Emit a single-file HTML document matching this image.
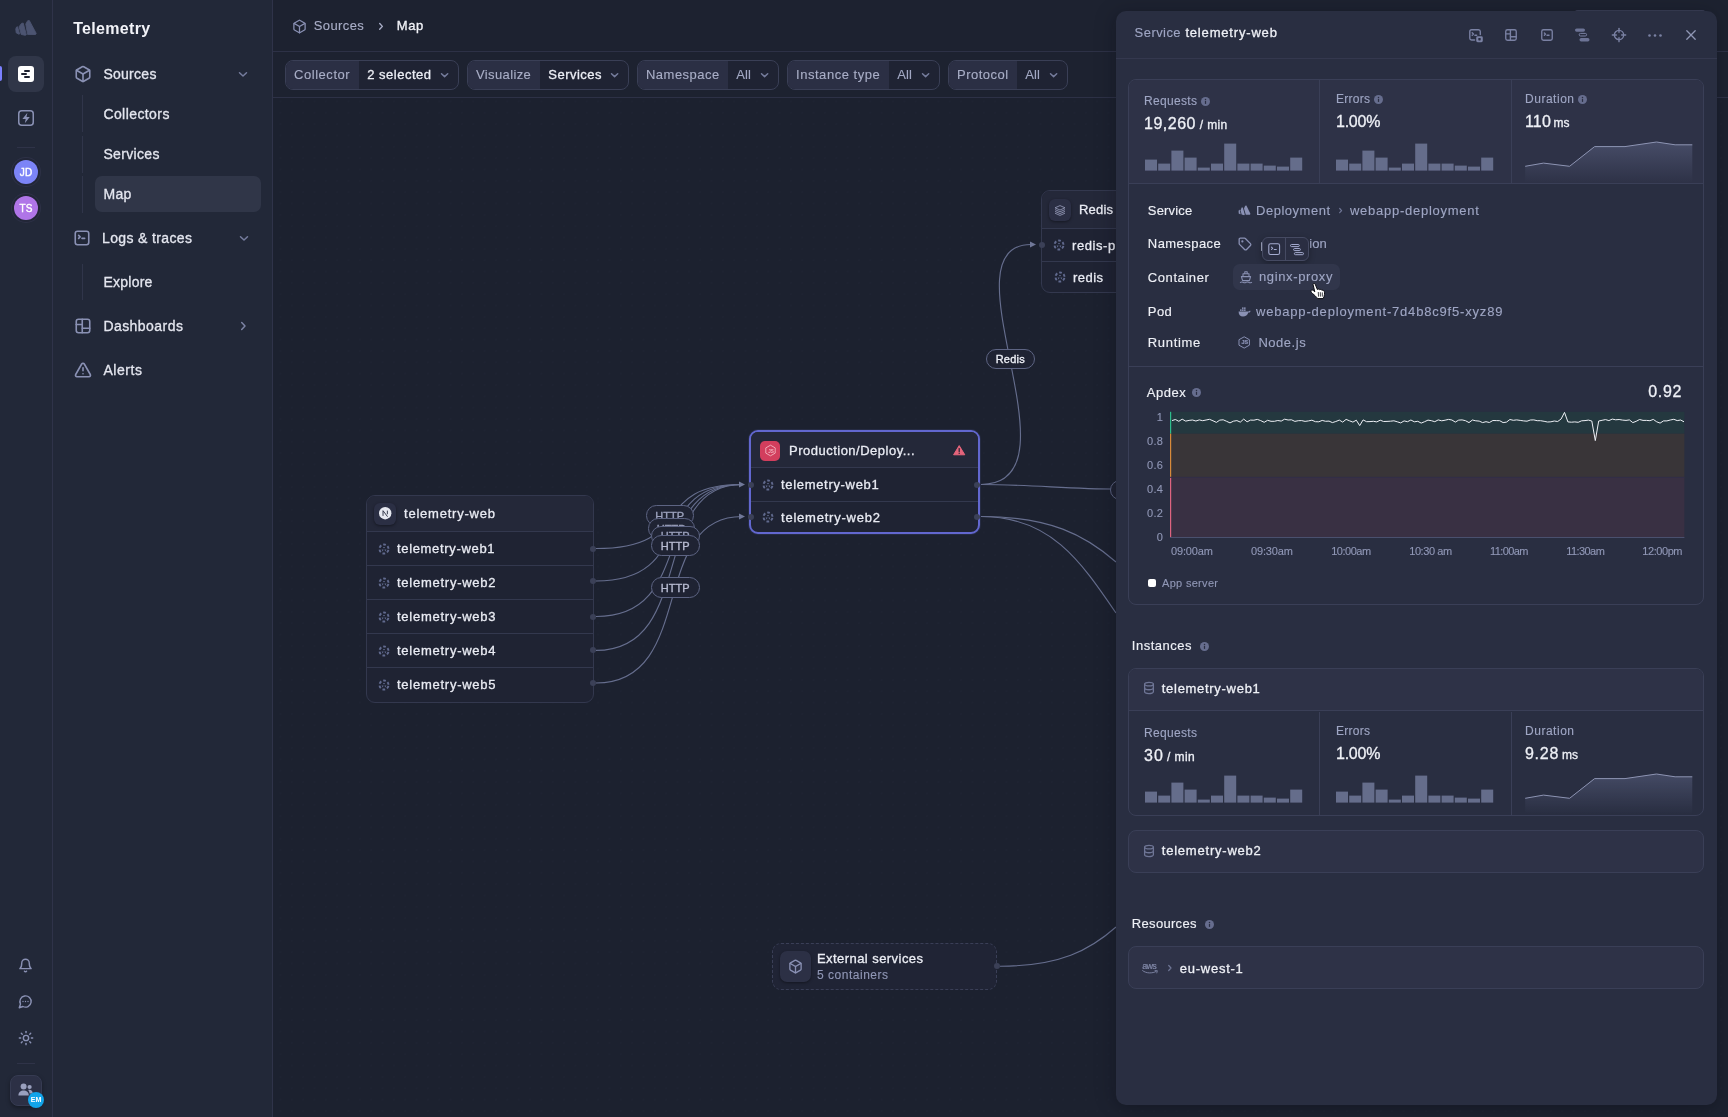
<!DOCTYPE html>
<html><head><meta charset="utf-8"><title>Telemetry - Map</title>
<style>
html,body{margin:0;padding:0;}
body{width:1728px;height:1117px;overflow:hidden;background:#1c212f;font-family:"Liberation Sans", sans-serif;position:relative;-webkit-font-smoothing:antialiased;}
#root{position:absolute;left:0;top:0;width:1728px;height:1117px;overflow:hidden;will-change:transform;}
</style></head><body><div id="root">
<div style="position:absolute;left:273px;top:98px;width:1455px;height:1019px;background-color:#1c212f;background-image:radial-gradient(circle,#363b54 0.3px,transparent 0.7px);background-size:11.345px 11.345px;background-position:1.8px -2.3px"></div>
<svg style="position:absolute;left:0;top:0" width="1728" height="1117" viewBox="0 0 1728 1117"><path d="M596 548.5 C697.4 548.5 648 484.5 742 484.5" stroke="#666e8e" stroke-width="1.15" fill="none"/><path d="M596 581 C697.4 581 648 484.5 742 484.5" stroke="#666e8e" stroke-width="1.15" fill="none"/><path d="M596 616.5 C697.4 616.5 648 484.5 742 484.5" stroke="#666e8e" stroke-width="1.15" fill="none"/><path d="M596 650.4 C697.4 650.4 648 484.5 742 484.5" stroke="#666e8e" stroke-width="1.15" fill="none"/><path d="M596 683 C697.4 683 648 516.5 742 516.5" stroke="#666e8e" stroke-width="1.15" fill="none"/><path d="M981 484.5 C1085 484.5 940 244.5 1031 244.5" stroke="#666e8e" stroke-width="1.15" fill="none"/><path d="M981 484.5 C1030 484.5 1070 489 1116 489" stroke="#666e8e" stroke-width="1.15" fill="none"/><path d="M981 516.5 C1050 516.5 1085 535 1116 562" stroke="#666e8e" stroke-width="1.15" fill="none"/><path d="M981 516.5 C1050 516.5 1080 560 1116 613" stroke="#666e8e" stroke-width="1.15" fill="none"/><path d="M1000 966.2 C1060 966.2 1090 950 1116 927" stroke="#666e8e" stroke-width="1.15" fill="none"/><path d="M745 484.5 L739 481.5 L739 487.5 Z" fill="#707898"/><path d="M745 516.5 L739 513.5 L739 519.5 Z" fill="#707898"/><path d="M1036 244.5 L1030 241.5 L1030 247.5 Z" fill="#707898"/></svg>
<div style="position:absolute;left:1110px;top:479.5px;width:40px;height:20px;box-sizing:border-box;border:1px solid #5d6483;border-radius:10px;background:#1f2333;"></div>
<div style="position:absolute;left:646.2px;top:505.4px;width:47.5px;height:20.6px;box-sizing:border-box;border:1px solid #5d6483;border-radius:10.3px;background:#1f2333"></div><span style="position:absolute;top:511px;font-size:11px;line-height:11px;letter-spacing:0.094px;color:#9ca2bd;white-space:nowrap;left:655.20px;-webkit-text-stroke:0.35px #9ca2bd;">HTTP</span>
<div style="position:absolute;left:647.8px;top:518.2px;width:47.5px;height:20.6px;box-sizing:border-box;border:1px solid #5d6483;border-radius:10.3px;background:#1f2333"></div><span style="position:absolute;top:524px;font-size:11px;line-height:11px;letter-spacing:0.094px;color:#9ca2bd;white-space:nowrap;left:656.70px;-webkit-text-stroke:0.35px #9ca2bd;">HTTP</span>
<div style="position:absolute;left:651.2px;top:525.7px;width:48.5px;height:20.6px;box-sizing:border-box;border:1px solid #5d6483;border-radius:10.3px;background:#1f2333"></div><span style="position:absolute;top:531px;font-size:11px;line-height:11px;letter-spacing:0.094px;color:#9ca2bd;white-space:nowrap;left:660.70px;-webkit-text-stroke:0.35px #9ca2bd;">HTTP</span>
<div style="position:absolute;left:651.2px;top:535.3px;width:48.5px;height:20.6px;box-sizing:border-box;border:1px solid #5d6483;border-radius:10.3px;background:#1f2333"></div><span style="position:absolute;top:541px;font-size:11px;line-height:11px;letter-spacing:0.094px;color:#b9bdd3;white-space:nowrap;left:660.70px;-webkit-text-stroke:0.35px #b9bdd3;">HTTP</span>
<div style="position:absolute;left:651.2px;top:577.3px;width:48.5px;height:20.8px;box-sizing:border-box;border:1px solid #5d6483;border-radius:10.4px;background:#1f2333"></div><span style="position:absolute;top:583px;font-size:11px;line-height:11px;letter-spacing:0.094px;color:#b9bdd3;white-space:nowrap;left:660.70px;-webkit-text-stroke:0.35px #b9bdd3;">HTTP</span>
<div style="position:absolute;left:986.2px;top:348.5px;width:48.5px;height:20px;box-sizing:border-box;border:1px solid #5d6483;border-radius:10.0px;background:#1f2333"></div><span style="position:absolute;top:354px;font-size:11px;line-height:11px;letter-spacing:0.220px;color:#eceef5;white-space:nowrap;left:995.70px;-webkit-text-stroke:0.35px #eceef5;">Redis</span>
<div style="position:absolute;left:366px;top:495px;width:228px;height:208px;box-sizing:border-box;border:1px solid #33384e;border-radius:9px;background:#1f2333;overflow:hidden"><div style="position:absolute;left:0;top:0;right:0;height:35px;background:#242839"></div><div style="position:absolute;left:0;right:0;top:35px;height:1px;background:#33384e"></div><div style="position:absolute;left:0;right:0;top:69px;height:1px;background:#33384e"></div><div style="position:absolute;left:0;right:0;top:103px;height:1px;background:#33384e"></div><div style="position:absolute;left:0;right:0;top:137px;height:1px;background:#33384e"></div><div style="position:absolute;left:0;right:0;top:171px;height:1px;background:#33384e"></div></div>
<div style="position:absolute;left:374px;top:502.5px;width:22px;height:22px;background:#2b2f44;border-radius:6px;box-shadow:0 1px 3px rgba(0,0,0,.4);"></div>
<svg style="position:absolute;left:378.8px;top:507.2px;overflow:visible;" width="12.4" height="12.4" viewBox="0 0 12 12" fill="none"><circle cx="6" cy="6" r="6" fill="#e6e8f0"/><path d="M3.9 8.6V3.6L8.3 9.4" stroke="#2a2e42" stroke-width="0.9" fill="none"/><path d="M8.1 3.5V7" stroke="#2a2e42" stroke-width="0.9"/></svg>
<span style="position:absolute;top:507px;font-size:13px;line-height:13px;letter-spacing:0.780px;color:#e9ebf3;white-space:nowrap;left:404.00px;-webkit-text-stroke:0.3px #e9ebf3;">telemetry-web</span>
<svg style="position:absolute;left:378.2px;top:542.5px;overflow:visible;" width="12" height="12" viewBox="0 0 12 12" fill="none"><circle cx="6" cy="6" r="4.5" stroke="#616a8e" stroke-width="1.9" stroke-dasharray="2.75 1.962" stroke-dashoffset="3.75"/><path d="M6 5.6 L4.9 3.9 H7.1Z M5.6 6.4 L3.6 6.6 L4.7 8.4Z M6.4 6.4 L8.4 6.6 L7.3 8.4Z" fill="#616a8e"/></svg>
<span style="position:absolute;top:542px;font-size:13px;line-height:13px;letter-spacing:0.664px;color:#e9ebf3;white-space:nowrap;left:397.00px;-webkit-text-stroke:0.3px #e9ebf3;">telemetry-web1</span>
<div style="position:absolute;left:590px;top:545.5px;width:6px;height:6px;background:#3b4057;border-radius:50%;"></div>
<svg style="position:absolute;left:378.2px;top:576.5px;overflow:visible;" width="12" height="12" viewBox="0 0 12 12" fill="none"><circle cx="6" cy="6" r="4.5" stroke="#616a8e" stroke-width="1.9" stroke-dasharray="2.75 1.962" stroke-dashoffset="3.75"/><path d="M6 5.6 L4.9 3.9 H7.1Z M5.6 6.4 L3.6 6.6 L4.7 8.4Z M6.4 6.4 L8.4 6.6 L7.3 8.4Z" fill="#616a8e"/></svg>
<span style="position:absolute;top:576px;font-size:13px;line-height:13px;letter-spacing:0.741px;color:#e9ebf3;white-space:nowrap;left:397.00px;-webkit-text-stroke:0.3px #e9ebf3;">telemetry-web2</span>
<div style="position:absolute;left:590px;top:578px;width:6px;height:6px;background:#3b4057;border-radius:50%;"></div>
<svg style="position:absolute;left:378.2px;top:610.5px;overflow:visible;" width="12" height="12" viewBox="0 0 12 12" fill="none"><circle cx="6" cy="6" r="4.5" stroke="#616a8e" stroke-width="1.9" stroke-dasharray="2.75 1.962" stroke-dashoffset="3.75"/><path d="M6 5.6 L4.9 3.9 H7.1Z M5.6 6.4 L3.6 6.6 L4.7 8.4Z M6.4 6.4 L8.4 6.6 L7.3 8.4Z" fill="#616a8e"/></svg>
<span style="position:absolute;top:610px;font-size:13px;line-height:13px;letter-spacing:0.741px;color:#e9ebf3;white-space:nowrap;left:397.00px;-webkit-text-stroke:0.3px #e9ebf3;">telemetry-web3</span>
<div style="position:absolute;left:590px;top:613.5px;width:6px;height:6px;background:#3b4057;border-radius:50%;"></div>
<svg style="position:absolute;left:378.2px;top:644.5px;overflow:visible;" width="12" height="12" viewBox="0 0 12 12" fill="none"><circle cx="6" cy="6" r="4.5" stroke="#616a8e" stroke-width="1.9" stroke-dasharray="2.75 1.962" stroke-dashoffset="3.75"/><path d="M6 5.6 L4.9 3.9 H7.1Z M5.6 6.4 L3.6 6.6 L4.7 8.4Z M6.4 6.4 L8.4 6.6 L7.3 8.4Z" fill="#616a8e"/></svg>
<span style="position:absolute;top:644px;font-size:13px;line-height:13px;letter-spacing:0.741px;color:#e9ebf3;white-space:nowrap;left:397.00px;-webkit-text-stroke:0.3px #e9ebf3;">telemetry-web4</span>
<div style="position:absolute;left:590px;top:647.4px;width:6px;height:6px;background:#3b4057;border-radius:50%;"></div>
<svg style="position:absolute;left:378.2px;top:678.5px;overflow:visible;" width="12" height="12" viewBox="0 0 12 12" fill="none"><circle cx="6" cy="6" r="4.5" stroke="#616a8e" stroke-width="1.9" stroke-dasharray="2.75 1.962" stroke-dashoffset="3.75"/><path d="M6 5.6 L4.9 3.9 H7.1Z M5.6 6.4 L3.6 6.6 L4.7 8.4Z M6.4 6.4 L8.4 6.6 L7.3 8.4Z" fill="#616a8e"/></svg>
<span style="position:absolute;top:678px;font-size:13px;line-height:13px;letter-spacing:0.741px;color:#e9ebf3;white-space:nowrap;left:397.00px;-webkit-text-stroke:0.3px #e9ebf3;">telemetry-web5</span>
<div style="position:absolute;left:590px;top:680px;width:6px;height:6px;background:#3b4057;border-radius:50%;"></div>
<div style="position:absolute;left:749px;top:430px;width:231px;height:104px;box-sizing:border-box;border:2px solid #6267cf;border-radius:9px;background:#1f2333;box-shadow:0 0 0 1px rgba(107,112,217,.12);overflow:hidden"><div style="position:absolute;left:0;top:0;right:0;height:35px;background:#242839"></div><div style="position:absolute;left:0;right:0;top:35px;height:1px;background:#33384e"></div><div style="position:absolute;left:0;right:0;top:69px;height:1px;background:#33384e"></div></div>
<div style="position:absolute;left:760px;top:440.5px;width:20px;height:20px;background:#d23e5d;border-radius:5px;"></div>
<svg style="position:absolute;left:763.5px;top:444px;overflow:visible;" width="13" height="13" viewBox="0 0 13 13" fill="none"><path d="M6.5 1.2 L11.2 3.9 V9.1 L6.5 11.8 L1.8 9.1 V3.9 Z" stroke="#f3b3c0" stroke-width="0.9" fill="none"/><text x="4.2" y="8.6" font-family="Liberation Sans" font-size="4.6" font-weight="bold" fill="#f3b3c0">JS</text></svg>
<span style="position:absolute;top:444px;font-size:13px;line-height:13px;letter-spacing:0.495px;color:#e9ebf3;white-space:nowrap;left:789.00px;-webkit-text-stroke:0.3px #e9ebf3;">Production/Deploy...</span>
<svg style="position:absolute;left:952.8px;top:444.8px;overflow:visible;" width="12.4" height="10.4" viewBox="0 0 12.4 10.4" fill="none"><path d="M6.2 0.6 L11.8 9.8 H0.6 Z" fill="#e5647b" stroke="#e5647b" stroke-width="1" stroke-linejoin="round"/><path d="M6.2 3.6V6.4" stroke="#1f2333" stroke-width="1.2" stroke-linecap="round"/><circle cx="6.2" cy="8.2" r="0.7" fill="#1f2333"/></svg>
<svg style="position:absolute;left:762.2px;top:478.6px;overflow:visible;" width="12" height="12" viewBox="0 0 12 12" fill="none"><circle cx="6" cy="6" r="4.5" stroke="#616a8e" stroke-width="1.9" stroke-dasharray="2.75 1.962" stroke-dashoffset="3.75"/><path d="M6 5.6 L4.9 3.9 H7.1Z M5.6 6.4 L3.6 6.6 L4.7 8.4Z M6.4 6.4 L8.4 6.6 L7.3 8.4Z" fill="#616a8e"/></svg>
<span style="position:absolute;top:478px;font-size:13px;line-height:13px;letter-spacing:0.679px;color:#e9ebf3;white-space:nowrap;left:781.00px;-webkit-text-stroke:0.3px #e9ebf3;">telemetry-web1</span>
<div style="position:absolute;left:747.8px;top:481.6px;width:6px;height:6px;background:#3b4057;border-radius:50%;"></div>
<div style="position:absolute;left:974px;top:481.6px;width:6px;height:6px;background:#3b4057;border-radius:50%;"></div>
<svg style="position:absolute;left:762.2px;top:510.79999999999995px;overflow:visible;" width="12" height="12" viewBox="0 0 12 12" fill="none"><circle cx="6" cy="6" r="4.5" stroke="#616a8e" stroke-width="1.9" stroke-dasharray="2.75 1.962" stroke-dashoffset="3.75"/><path d="M6 5.6 L4.9 3.9 H7.1Z M5.6 6.4 L3.6 6.6 L4.7 8.4Z M6.4 6.4 L8.4 6.6 L7.3 8.4Z" fill="#616a8e"/></svg>
<span style="position:absolute;top:511px;font-size:13px;line-height:13px;letter-spacing:0.779px;color:#e9ebf3;white-space:nowrap;left:781.00px;-webkit-text-stroke:0.3px #e9ebf3;">telemetry-web2</span>
<div style="position:absolute;left:747.8px;top:513.8px;width:6px;height:6px;background:#3b4057;border-radius:50%;"></div>
<div style="position:absolute;left:974px;top:513.8px;width:6px;height:6px;background:#3b4057;border-radius:50%;"></div>
<div style="position:absolute;left:1041px;top:190px;width:120px;height:103px;box-sizing:border-box;border:1px solid #33384e;border-radius:9px;background:#1f2333;overflow:hidden"><div style="position:absolute;left:0;top:0;right:0;height:37px;background:#242839"></div><div style="position:absolute;left:0;right:0;top:37px;height:1px;background:#33384e"></div><div style="position:absolute;left:0;right:0;top:70px;height:1px;background:#33384e"></div></div>
<div style="position:absolute;left:1049px;top:199px;width:22px;height:22px;background:#2b2f44;border-radius:6px;box-shadow:0 1px 3px rgba(0,0,0,.4);"></div>
<svg style="position:absolute;left:1054px;top:204px;overflow:visible;" width="12" height="12" viewBox="0 0 12 12" fill="none"><g stroke="#9aa0be" stroke-width="0.8" fill="none"><path d="M6 1.6 L11 3.8 L6 6 L1 3.8Z"/><path d="M1 5.6 L6 7.8 L11 5.6"/><path d="M1 7.4 L6 9.6 L11 7.4"/><path d="M1 9.2 L6 11.4 L11 9.2"/></g></svg>
<span style="position:absolute;top:203px;font-size:13px;line-height:13px;letter-spacing:0.190px;color:#e9ebf3;white-space:nowrap;left:1079.00px;-webkit-text-stroke:0.3px #e9ebf3;">Redis</span>
<svg style="position:absolute;left:1052.8px;top:238.7px;overflow:visible;" width="12" height="12" viewBox="0 0 12 12" fill="none"><circle cx="6" cy="6" r="4.5" stroke="#616a8e" stroke-width="1.9" stroke-dasharray="2.75 1.962" stroke-dashoffset="3.75"/><path d="M6 5.6 L4.9 3.9 H7.1Z M5.6 6.4 L3.6 6.6 L4.7 8.4Z M6.4 6.4 L8.4 6.6 L7.3 8.4Z" fill="#616a8e"/></svg>
<span style="position:absolute;top:239px;font-size:13px;line-height:13px;letter-spacing:0.570px;color:#e9ebf3;white-space:nowrap;left:1072.00px;-webkit-text-stroke:0.3px #e9ebf3;">redis-proxy</span>
<svg style="position:absolute;left:1053.8px;top:270.7px;overflow:visible;" width="12" height="12" viewBox="0 0 12 12" fill="none"><circle cx="6" cy="6" r="4.5" stroke="#616a8e" stroke-width="1.9" stroke-dasharray="2.75 1.962" stroke-dashoffset="3.75"/><path d="M6 5.6 L4.9 3.9 H7.1Z M5.6 6.4 L3.6 6.6 L4.7 8.4Z M6.4 6.4 L8.4 6.6 L7.3 8.4Z" fill="#616a8e"/></svg>
<span style="position:absolute;top:271px;font-size:13px;line-height:13px;letter-spacing:0.455px;color:#e9ebf3;white-space:nowrap;left:1073.00px;-webkit-text-stroke:0.3px #e9ebf3;">redis</span>
<div style="position:absolute;left:1039px;top:241.6px;width:6px;height:6px;background:#3b4057;border-radius:50%;"></div>
<div style="position:absolute;left:771.5px;top:943px;width:225.5px;height:47px;box-sizing:border-box;border:1px dashed #3a3f57;border-radius:9px;background:#202435;"></div>
<div style="position:absolute;left:779.5px;top:950.5px;width:31px;height:31px;background:#2c3045;border-radius:7px;box-shadow:0 1px 3px rgba(0,0,0,.4);"></div>
<svg style="position:absolute;left:787.5px;top:958.5px;overflow:visible;" width="15" height="15" viewBox="0 0 24 24" fill="none"><g stroke="#8a91b4" stroke-width="2.08" stroke-linecap="round" stroke-linejoin="round" fill="none"><path d="M21 8a2 2 0 0 0-1-1.73l-7-4a2 2 0 0 0-2 0l-7 4A2 2 0 0 0 3 8v8a2 2 0 0 0 1 1.73l7 4a2 2 0 0 0 2 0l7-4A2 2 0 0 0 21 16Z"/><path d="m3.3 7 8.7 5 8.7-5"/><path d="M12 22V12"/></g></svg>
<span style="position:absolute;top:952px;font-size:13px;line-height:13px;letter-spacing:0.438px;color:#eceef5;white-space:nowrap;left:817.00px;-webkit-text-stroke:0.3px #eceef5;">External services</span>
<span style="position:absolute;top:969px;font-size:12px;line-height:12px;letter-spacing:0.512px;color:#9097b6;white-space:nowrap;left:817.00px;-webkit-text-stroke:0.12px #9097b6;">5 containers</span>
<div style="position:absolute;left:993.8px;top:963.2px;width:6px;height:6px;background:#3b4057;border-radius:50%;"></div>
<div style="position:absolute;left:273px;top:0px;width:1455px;height:97px;background:#1d2230;"></div>
<div style="position:absolute;left:273px;top:51px;width:1455px;height:1px;background:#2d3146;"></div>
<div style="position:absolute;left:273px;top:97px;width:1455px;height:1px;background:#2d3146;"></div>
<svg style="position:absolute;left:291.5px;top:18.5px;overflow:visible;" width="15" height="15" viewBox="0 0 24 24" fill="none"><g stroke="#8a91b4" stroke-width="2.00" stroke-linecap="round" stroke-linejoin="round" fill="none"><path d="M21 8a2 2 0 0 0-1-1.73l-7-4a2 2 0 0 0-2 0l-7 4A2 2 0 0 0 3 8v8a2 2 0 0 0 1 1.73l7 4a2 2 0 0 0 2 0l7-4A2 2 0 0 0 21 16Z"/><path d="m3.3 7 8.7 5 8.7-5"/><path d="M12 22V12"/></g></svg>
<span style="position:absolute;top:19px;font-size:13px;line-height:13px;letter-spacing:0.384px;color:#a9aec7;white-space:nowrap;left:313.80px;-webkit-text-stroke:0.12px #a9aec7;">Sources</span>
<svg style="position:absolute;left:378.6px;top:22.6px;overflow:visible;" width="4.4" height="6.8" viewBox="0 0 4.4 6.8" fill="none"><path d="M0.7 0.5 L3.4 3.4 L0.7 6.3" stroke="#a9aec7" stroke-width="1.4" stroke-linecap="round" stroke-linejoin="round"/></svg>
<span style="position:absolute;top:19px;font-size:13px;line-height:13px;letter-spacing:0.554px;color:#f2f3f8;white-space:nowrap;left:396.80px;-webkit-text-stroke:0.3px #f2f3f8;">Map</span>
<div style="position:absolute;left:285px;top:60px;width:174px;height:30px;box-sizing:border-box;border:1px solid #3a3f56;border-radius:8px;background:#1f2333;overflow:hidden"><div style="position:absolute;left:0;top:0;bottom:0;width:73px;background:#2b2f44"></div></div><span style="position:absolute;top:68px;font-size:13px;line-height:13px;letter-spacing:0.550px;color:#a9aec7;white-space:nowrap;left:294.00px;-webkit-text-stroke:0.12px #a9aec7;">Collector</span><span style="position:absolute;top:68px;font-size:13px;line-height:13px;letter-spacing:0.493px;color:#eceef5;white-space:nowrap;left:367.30px;-webkit-text-stroke:0.3px #eceef5;">2 selected</span><svg style="position:absolute;left:441.4px;top:72.9px;overflow:visible;" width="7.2" height="4.6" viewBox="0 0 7.2 4.6" fill="none"><path d="M0.5 0.7 L3.6 3.6 L6.7 0.7" stroke="#757c9c" stroke-width="1.5" stroke-linecap="round" stroke-linejoin="round"/></svg>
<div style="position:absolute;left:467px;top:60px;width:162px;height:30px;box-sizing:border-box;border:1px solid #3a3f56;border-radius:8px;background:#1f2333;overflow:hidden"><div style="position:absolute;left:0;top:0;bottom:0;width:72px;background:#2b2f44"></div></div><span style="position:absolute;top:68px;font-size:13px;line-height:13px;letter-spacing:0.376px;color:#a9aec7;white-space:nowrap;left:476.00px;-webkit-text-stroke:0.12px #a9aec7;">Visualize</span><span style="position:absolute;top:68px;font-size:13px;line-height:13px;letter-spacing:0.478px;color:#eceef5;white-space:nowrap;left:548.30px;-webkit-text-stroke:0.3px #eceef5;">Services</span><svg style="position:absolute;left:611.4px;top:72.9px;overflow:visible;" width="7.2" height="4.6" viewBox="0 0 7.2 4.6" fill="none"><path d="M0.5 0.7 L3.6 3.6 L6.7 0.7" stroke="#757c9c" stroke-width="1.5" stroke-linecap="round" stroke-linejoin="round"/></svg>
<div style="position:absolute;left:637px;top:60px;width:142px;height:30px;box-sizing:border-box;border:1px solid #3a3f56;border-radius:8px;background:#1f2333;overflow:hidden"><div style="position:absolute;left:0;top:0;bottom:0;width:90px;background:#2b2f44"></div></div><span style="position:absolute;top:68px;font-size:13px;line-height:13px;letter-spacing:0.479px;color:#a9aec7;white-space:nowrap;left:646.00px;-webkit-text-stroke:0.12px #a9aec7;">Namespace</span><span style="position:absolute;top:68px;font-size:13px;line-height:13px;letter-spacing:0.025px;color:#a2a8c3;white-space:nowrap;left:736.30px;-webkit-text-stroke:0.12px #a2a8c3;">All</span><svg style="position:absolute;left:761.4px;top:72.9px;overflow:visible;" width="7.2" height="4.6" viewBox="0 0 7.2 4.6" fill="none"><path d="M0.5 0.7 L3.6 3.6 L6.7 0.7" stroke="#757c9c" stroke-width="1.5" stroke-linecap="round" stroke-linejoin="round"/></svg>
<div style="position:absolute;left:787px;top:60px;width:153px;height:30px;box-sizing:border-box;border:1px solid #3a3f56;border-radius:8px;background:#1f2333;overflow:hidden"><div style="position:absolute;left:0;top:0;bottom:0;width:101px;background:#2b2f44"></div></div><span style="position:absolute;top:68px;font-size:13px;line-height:13px;letter-spacing:0.539px;color:#a9aec7;white-space:nowrap;left:796.00px;-webkit-text-stroke:0.12px #a9aec7;">Instance type</span><span style="position:absolute;top:68px;font-size:13px;line-height:13px;letter-spacing:0.025px;color:#a2a8c3;white-space:nowrap;left:897.30px;-webkit-text-stroke:0.12px #a2a8c3;">All</span><svg style="position:absolute;left:922.4px;top:72.9px;overflow:visible;" width="7.2" height="4.6" viewBox="0 0 7.2 4.6" fill="none"><path d="M0.5 0.7 L3.6 3.6 L6.7 0.7" stroke="#757c9c" stroke-width="1.5" stroke-linecap="round" stroke-linejoin="round"/></svg>
<div style="position:absolute;left:948px;top:60px;width:120px;height:30px;box-sizing:border-box;border:1px solid #3a3f56;border-radius:8px;background:#1f2333;overflow:hidden"><div style="position:absolute;left:0;top:0;bottom:0;width:68px;background:#2b2f44"></div></div><span style="position:absolute;top:68px;font-size:13px;line-height:13px;letter-spacing:0.501px;color:#a9aec7;white-space:nowrap;left:957.00px;-webkit-text-stroke:0.12px #a9aec7;">Protocol</span><span style="position:absolute;top:68px;font-size:13px;line-height:13px;letter-spacing:0.025px;color:#a2a8c3;white-space:nowrap;left:1025.30px;-webkit-text-stroke:0.12px #a2a8c3;">All</span><svg style="position:absolute;left:1050.4px;top:72.9px;overflow:visible;" width="7.2" height="4.6" viewBox="0 0 7.2 4.6" fill="none"><path d="M0.5 0.7 L3.6 3.6 L6.7 0.7" stroke="#757c9c" stroke-width="1.5" stroke-linecap="round" stroke-linejoin="round"/></svg>
<div style="position:absolute;left:0px;top:0px;width:272px;height:1117px;background:#222838;"></div>
<div style="position:absolute;left:52px;top:0px;width:1px;height:1117px;background:#2f3349;"></div>
<div style="position:absolute;left:272px;top:0px;width:1px;height:1117px;background:#2f3349;"></div>
<svg style="position:absolute;left:14px;top:19px;overflow:visible;" width="24" height="18" viewBox="0 0 24 18" fill="none"><g fill="#4c5471" stroke="#4c5471" stroke-width="0.9" stroke-linejoin="round"><path d="M13.7 1.700L15.300 1.500L22.200 14.400L21.500 15.500L13.600 15.400L11.800 5Z"/><path d="M7.500 4.400L9.200 4.100L12.300 15.700L11.200 16.300L7.200 15.400L5.100 7.800Z"/><path d="M2.600 8L3.600 7.800L5.600 14.900L5 15.300L2.200 13.800L1.800 10Z"/></g></svg>
<div style="position:absolute;left:0px;top:66px;width:2px;height:15px;background:#7b80ff;border-radius:0 2px 2px 0;"></div>
<div style="position:absolute;left:8px;top:56px;width:36px;height:36px;background:#303648;border-radius:8px;"></div>
<div style="position:absolute;left:18px;top:66px;width:16px;height:16px;background:#ffffff;border-radius:3px;"></div>
<div style="position:absolute;left:23.5px;top:70.2px;width:6.5px;height:1.9px;background:#1d2130;border-radius:1px;"></div>
<div style="position:absolute;left:21px;top:73.1px;width:6px;height:1.9px;background:#1d2130;border-radius:1px;"></div>
<div style="position:absolute;left:24px;top:76px;width:6px;height:1.9px;background:#1d2130;border-radius:1px;"></div>
<svg style="position:absolute;left:17px;top:109.1px;overflow:visible;" width="18" height="18" viewBox="0 0 18 18" fill="none"><rect x="1.750" y="1.750" width="14.500" height="14.500" rx="3" stroke="#8a91b4" stroke-width="1.500"/><path d="M10.400 3.700L5.400 9.900H8.700L7.800 14.300L12.800 8H9.500Z" fill="#8a91b4"/></svg>
<div style="position:absolute;left:17px;top:147px;width:18px;height:1px;background:#2f3348;"></div>
<div style="position:absolute;left:14px;top:160px;width:24px;height:24px;border-radius:50%;background:#7c84f7;box-shadow:0 0 0 2px #222637,0 0 0 3px #2d3146;color:#fff;font-size:10px;line-height:25.6px;text-align:center;letter-spacing:0.2px;-webkit-text-stroke:0.4px #fff">JD</div>
<div style="position:absolute;left:14px;top:196px;width:24px;height:24px;border-radius:50%;background:#b075e8;box-shadow:0 0 0 2px #222637,0 0 0 3px #2d3146;color:#fff;font-size:10px;line-height:25.6px;text-align:center;letter-spacing:0.2px;-webkit-text-stroke:0.4px #fff">TS</div>
<svg style="position:absolute;left:18.2px;top:958.2px;overflow:visible;" width="15" height="15" viewBox="0 0 24 24" fill="none"><g stroke="#8a91b4" stroke-width="2.24" stroke-linecap="round" stroke-linejoin="round" fill="none"><path d="M6 8a6 6 0 0 1 12 0c0 7 3 9 3 9H3s3-2 3-9"/><path d="M10.3 21a1.94 1.94 0 0 0 3.4 0"/></g></svg>
<svg style="position:absolute;left:18.2px;top:994.1px;overflow:visible;" width="15" height="15" viewBox="0 0 24 24" fill="none"><g stroke="#8a91b4" stroke-width="2.24" stroke-linecap="round" stroke-linejoin="round" fill="none"><path d="M7.9 20A9 9 0 1 0 4 16.1L2 22Z"/><path d="M8 12h.01"/><path d="M12 12h.01"/><path d="M16 12h.01"/></g></svg>
<svg style="position:absolute;left:18.0px;top:1030.0px;overflow:visible;" width="16" height="16" viewBox="0 0 24 24" fill="none"><g stroke="#8a91b4" stroke-width="2.10" stroke-linecap="round" stroke-linejoin="round" fill="none"><circle cx="12" cy="12" r="4"/><path d="M12 2v2"/><path d="M12 20v2"/><path d="m4.93 4.93 1.41 1.41"/><path d="m17.66 17.66 1.41 1.41"/><path d="M2 12h2"/><path d="M20 12h2"/><path d="m6.34 17.66-1.41 1.41"/><path d="m19.07 4.93-1.41 1.41"/></g></svg>
<div style="position:absolute;left:17px;top:1063px;width:18px;height:1px;background:#2f3348;"></div>
<div style="position:absolute;left:10px;top:1075px;width:32px;height:31px;box-sizing:border-box;border:1px solid #363b52;background:#2c3045;border-radius:8px;box-shadow:0 2px 4px rgba(0,0,0,.35);"></div>
<svg style="position:absolute;left:18px;top:1083px;overflow:visible;" width="15" height="13" viewBox="0 0 15 13" fill="none"><g fill="#9aa0be"><circle cx="5.6" cy="3.4" r="3"/><path d="M0.4 12.4c0-3.2 2.3-5 5.2-5s5.2 1.8 5.2 5z"/><circle cx="11.6" cy="4" r="2.1"/><path d="M10.2 7c2.6-.6 4.6.8 4.6 3.6h-3.2c-.1-1.5-.6-2.7-1.4-3.6z"/></g></svg>
<div style="position:absolute;left:28px;top:1092px;width:16px;height:16px;border-radius:50%;background:#12a4e9;color:#fff;font-size:7px;font-weight:bold;line-height:16px;text-align:center">EM</div>
<span style="position:absolute;top:21px;font-size:16px;line-height:16px;letter-spacing:0.324px;color:#f2f3f8;white-space:nowrap;left:73.20px;font-weight:bold;">Telemetry</span>
<svg style="position:absolute;left:74.0px;top:65.2px;overflow:visible;" width="18" height="18" viewBox="0 0 24 24" fill="none"><g stroke="#8a91b4" stroke-width="2.13" stroke-linecap="round" stroke-linejoin="round" fill="none"><path d="M21 8a2 2 0 0 0-1-1.73l-7-4a2 2 0 0 0-2 0l-7 4A2 2 0 0 0 3 8v8a2 2 0 0 0 1 1.73l7 4a2 2 0 0 0 2 0l7-4A2 2 0 0 0 21 16Z"/><path d="m3.3 7 8.7 5 8.7-5"/><path d="M12 22V12"/></g></svg>
<span style="position:absolute;top:67px;font-size:14px;line-height:14px;letter-spacing:0.273px;color:#e4e6ef;white-space:nowrap;left:103.40px;-webkit-text-stroke:0.3px #e4e6ef;">Sources</span>
<svg style="position:absolute;left:239px;top:71.7px;overflow:visible;" width="8" height="5" viewBox="0 0 8 5" fill="none"><path d="M0.5 0.7 L4 4 L7.5 0.7" stroke="#767d9e" stroke-width="1.5" stroke-linecap="round" stroke-linejoin="round"/></svg>
<div style="position:absolute;left:95px;top:176px;width:166px;height:36px;background:#303648;border-radius:7px;"></div>
<div style="position:absolute;left:82px;top:95px;width:1px;height:37px;background:#30354a;"></div>
<div style="position:absolute;left:82px;top:135.5px;width:1px;height:37px;background:#30354a;"></div>
<div style="position:absolute;left:82px;top:175.5px;width:1px;height:37px;background:#30354a;"></div>
<div style="position:absolute;left:82px;top:264px;width:1px;height:36px;background:#30354a;"></div>
<span style="position:absolute;top:107px;font-size:14px;line-height:14px;letter-spacing:0.417px;color:#e4e6ef;white-space:nowrap;left:103.40px;-webkit-text-stroke:0.3px #e4e6ef;">Collectors</span>
<span style="position:absolute;top:147px;font-size:14px;line-height:14px;letter-spacing:0.331px;color:#e4e6ef;white-space:nowrap;left:103.40px;-webkit-text-stroke:0.3px #e4e6ef;">Services</span>
<span style="position:absolute;top:187px;font-size:14px;line-height:14px;letter-spacing:0.382px;color:#e4e6ef;white-space:nowrap;left:103.40px;-webkit-text-stroke:0.3px #e4e6ef;">Map</span>
<svg style="position:absolute;left:73.0px;top:229.0px;overflow:visible;" width="18" height="18" viewBox="0 0 24 24" fill="none"><g stroke="#8a91b4" stroke-width="2.13" stroke-linecap="round" stroke-linejoin="round" fill="none"><rect x="3" y="3" width="18" height="18" rx="3"/><path d="m7.5 8.5 2 2-2 2"/><path d="M12 12.5h3.5"/></g></svg>
<span style="position:absolute;top:231px;font-size:14px;line-height:14px;letter-spacing:0.360px;color:#e4e6ef;white-space:nowrap;left:102.00px;-webkit-text-stroke:0.3px #e4e6ef;">Logs &amp; traces</span>
<svg style="position:absolute;left:240px;top:235.7px;overflow:visible;" width="8" height="5" viewBox="0 0 8 5" fill="none"><path d="M0.5 0.7 L4 4 L7.5 0.7" stroke="#767d9e" stroke-width="1.5" stroke-linecap="round" stroke-linejoin="round"/></svg>
<span style="position:absolute;top:275px;font-size:14px;line-height:14px;letter-spacing:0.255px;color:#e4e6ef;white-space:nowrap;left:103.40px;-webkit-text-stroke:0.3px #e4e6ef;">Explore</span>
<svg style="position:absolute;left:74.0px;top:317.0px;overflow:visible;" width="18" height="18" viewBox="0 0 24 24" fill="none"><g stroke="#8a91b4" stroke-width="2.13" stroke-linecap="round" stroke-linejoin="round" fill="none"><rect x="3" y="3" width="18" height="18" rx="3"/><path d="M11 3v18"/><path d="M11 15h10"/><path d="M3 10h8"/></g></svg>
<span style="position:absolute;top:319px;font-size:14px;line-height:14px;letter-spacing:0.445px;color:#e4e6ef;white-space:nowrap;left:103.40px;-webkit-text-stroke:0.3px #e4e6ef;">Dashboards</span>
<svg style="position:absolute;left:241.0px;top:322px;overflow:visible;" width="5" height="8" viewBox="0 0 5 8" fill="none"><path d="M0.7 0.5 L4 4 L0.7 7.5" stroke="#7c83a4" stroke-width="1.5" stroke-linecap="round" stroke-linejoin="round"/></svg>
<svg style="position:absolute;left:74.0px;top:360.6px;overflow:visible;" width="18" height="18" viewBox="0 0 24 24" fill="none"><g stroke="#8a91b4" stroke-width="2.13" stroke-linecap="round" stroke-linejoin="round" fill="none"><path d="m21.73 18-8-14a2 2 0 0 0-3.48 0l-8 14A2 2 0 0 0 4 21h16a2 2 0 0 0 1.73-3Z"/><path d="M12 9v4"/><path d="M12 17h.01"/></g></svg>
<span style="position:absolute;top:363px;font-size:14px;line-height:14px;letter-spacing:0.542px;color:#e4e6ef;white-space:nowrap;left:103.40px;-webkit-text-stroke:0.3px #e4e6ef;">Alerts</span>
<div style="position:absolute;left:1573px;top:10px;width:134px;height:6px;background:#272b3d;border-top:1px solid #3a3f56;border-radius:5px 5px 0 0;"></div>
<div style="position:absolute;left:1116px;top:11px;width:601px;height:1094px;background:#292e41;border-radius:10px;box-shadow:-4px 0 20px rgba(12,14,24,.16),0 4px 14px rgba(12,14,24,.14);"></div>
<span style="position:absolute;top:26px;font-size:13px;line-height:13px;letter-spacing:0.441px;color:#9fa6c4;white-space:nowrap;left:1134.60px;-webkit-text-stroke:0.12px #9fa6c4;">Service</span>
<span style="position:absolute;top:26px;font-size:13px;line-height:13px;letter-spacing:0.821px;color:#eef0f6;white-space:nowrap;left:1185.40px;-webkit-text-stroke:0.3px #eef0f6;">telemetry-web</span>
<div style="position:absolute;left:1116px;top:58px;width:601px;height:1px;background:#34384e;"></div>
<svg style="position:absolute;left:1468.3px;top:28.000000000000004px;overflow:visible;" width="14.4" height="14.4" viewBox="0 0 24 24" fill="none"><g stroke="#7a81a3" stroke-width="2.33" stroke-linecap="round" stroke-linejoin="round" fill="none"><path d="M20.5 11V6a3 3 0 0 0-3-3H6a3 3 0 0 0-3 3v11a3 3 0 0 0 3 3h5"/><path d="m7 8 2 2-2 2"/><path d="M11.5 12h3"/></g></svg>
<svg style="position:absolute;left:1475.8px;top:36.2px;overflow:visible;" width="7" height="6.4" viewBox="0 0 7 6.4" fill="none"><rect x="0.2" y="0.2" width="6.6" height="6" rx="1.500" fill="#7a81a3"/><rect x="2.300" y="2" width="2.400" height="2.400" rx="0.600" fill="#282c3f"/></svg>
<svg style="position:absolute;left:1504.0px;top:28.0px;overflow:visible;" width="14" height="14" viewBox="0 0 24 24" fill="none"><g stroke="#7a81a3" stroke-width="2.31" stroke-linecap="round" stroke-linejoin="round" fill="none"><rect x="3" y="3" width="18" height="18" rx="3"/><path d="M11 3v18"/><path d="M11 15h10"/><path d="M3 10h8"/></g></svg>
<svg style="position:absolute;left:1540.0px;top:28.0px;overflow:visible;" width="14" height="14" viewBox="0 0 24 24" fill="none"><g stroke="#7a81a3" stroke-width="2.31" stroke-linecap="round" stroke-linejoin="round" fill="none"><rect x="3" y="3" width="18" height="18" rx="3"/><path d="m7.5 8.5 2 2-2 2"/><path d="M12 12.5h3.5"/></g></svg>
<svg style="position:absolute;left:1575px;top:28px;overflow:visible;" width="15" height="14" viewBox="0 0 15 14" fill="none"><g fill="#6d7496"><rect x="0" y="0.5" width="10" height="3.2" rx="1.6"/><rect x="4.5" y="10" width="10" height="3.4" rx="1.7"/></g><rect x="4.2" y="5.4" width="7.4" height="2.6" rx="1.3" stroke="#7a81a3" stroke-width="1"/></svg>
<svg style="position:absolute;left:1611.0px;top:27.0px;overflow:visible;" width="16" height="16" viewBox="0 0 24 24" fill="none"><g stroke="#7a81a3" stroke-width="2.10" stroke-linecap="round" stroke-linejoin="round" fill="none"><circle cx="12" cy="12" r="7"/><path d="M12 2v6"/><path d="M12 16v6"/><path d="M2 12h6"/><path d="M16 12h6"/></g></svg>
<svg style="position:absolute;left:1648px;top:33.6px;overflow:visible;" width="14" height="3" viewBox="0 0 14 3" fill="none"><g fill="#7a81a3"><circle cx="1.5" cy="1.5" r="1.3"/><circle cx="7" cy="1.5" r="1.3"/><circle cx="12.5" cy="1.5" r="1.3"/></g></svg>
<svg style="position:absolute;left:1686px;top:30px;overflow:visible;" width="10" height="10" viewBox="0 0 10 10" fill="none"><path d="M0.8 0.8 L9.2 9.2 M9.2 0.8 L0.8 9.2" stroke="#9097b5" stroke-width="1.3" stroke-linecap="round"/></svg>
<div style="position:absolute;left:1128px;top:79px;width:576px;height:526px;box-sizing:border-box;border:1px solid #3a3f57;border-radius:8px;"></div>
<div style="position:absolute;left:1129px;top:80px;width:574px;height:103px;background:#2e3247;border-radius:7px 7px 0 0;"></div><div style="position:absolute;left:1319px;top:80px;width:1px;height:103px;background:#3a3f57;"></div><div style="position:absolute;left:1511px;top:80px;width:1px;height:103px;background:#3a3f57;"></div><span style="position:absolute;top:95px;font-size:12px;line-height:12px;letter-spacing:0.329px;color:#9fa6c4;white-space:nowrap;left:1144.00px;-webkit-text-stroke:0.12px #9fa6c4;">Requests</span><span style="position:absolute;top:93px;font-size:12px;line-height:12px;letter-spacing:0.267px;color:#9fa6c4;white-space:nowrap;left:1336.00px;-webkit-text-stroke:0.12px #9fa6c4;">Errors</span><span style="position:absolute;top:93px;font-size:12px;line-height:12px;letter-spacing:0.520px;color:#9fa6c4;white-space:nowrap;left:1525.00px;-webkit-text-stroke:0.12px #9fa6c4;">Duration</span><svg style="position:absolute;left:1200.5px;top:96.7px;overflow:visible;" width="9" height="9" viewBox="0 0 9 9" fill="none"><circle cx="4.5" cy="4.5" r="4.5" fill="#666d8e"/><rect x="3.9" y="3.9" width="1.2" height="3" fill="#2a2e42"/><circle cx="4.5" cy="2.6" r="0.75" fill="#2a2e42"/></svg><svg style="position:absolute;left:1373.5px;top:94.5px;overflow:visible;" width="9" height="9" viewBox="0 0 9 9" fill="none"><circle cx="4.5" cy="4.5" r="4.5" fill="#666d8e"/><rect x="3.9" y="3.9" width="1.2" height="3" fill="#2a2e42"/><circle cx="4.5" cy="2.6" r="0.75" fill="#2a2e42"/></svg><svg style="position:absolute;left:1577.5px;top:94.5px;overflow:visible;" width="9" height="9" viewBox="0 0 9 9" fill="none"><circle cx="4.5" cy="4.5" r="4.5" fill="#666d8e"/><rect x="3.9" y="3.9" width="1.2" height="3" fill="#2a2e42"/><circle cx="4.5" cy="2.6" r="0.75" fill="#2a2e42"/></svg><span style="position:absolute;top:116px;font-size:16px;line-height:16px;letter-spacing:0.512px;color:#eef0f6;white-space:nowrap;left:1144.00px;-webkit-text-stroke:0.3px #eef0f6;">19,260</span><span style="position:absolute;top:119px;font-size:12px;line-height:12px;letter-spacing:0.374px;color:#eef0f6;white-space:nowrap;left:1199.80px;-webkit-text-stroke:0.3px #eef0f6;">/ min</span><span style="position:absolute;top:114px;font-size:16px;line-height:16px;letter-spacing:-0.242px;color:#eef0f6;white-space:nowrap;left:1336.00px;-webkit-text-stroke:0.3px #eef0f6;">1.00%</span><span style="position:absolute;top:114px;font-size:16px;line-height:16px;letter-spacing:0.146px;color:#eef0f6;white-space:nowrap;left:1525.00px;-webkit-text-stroke:0.3px #eef0f6;">110</span><span style="position:absolute;top:117px;font-size:12px;line-height:12px;letter-spacing:0.104px;color:#eef0f6;white-space:nowrap;left:1553.40px;-webkit-text-stroke:0.3px #eef0f6;">ms</span><svg style="position:absolute;left:0;top:0" width="1728" height="1117" viewBox="0 0 1728 1117"><rect x="1145.00" y="159.6" width="12" height="11" fill="#656d8b"/><rect x="1158.20" y="163.6" width="12" height="7" fill="#656d8b"/><rect x="1171.40" y="150.6" width="12" height="20" fill="#656d8b"/><rect x="1184.60" y="157.6" width="12" height="13" fill="#656d8b"/><rect x="1197.80" y="167.6" width="12" height="3" fill="#656d8b"/><rect x="1211.00" y="163.6" width="12" height="7" fill="#656d8b"/><rect x="1224.20" y="143.6" width="12" height="27" fill="#656d8b"/><rect x="1237.40" y="163.6" width="12" height="7" fill="#656d8b"/><rect x="1250.60" y="163.6" width="12" height="7" fill="#656d8b"/><rect x="1263.80" y="165.6" width="12" height="5" fill="#656d8b"/><rect x="1277.00" y="166.6" width="12" height="4" fill="#656d8b"/><rect x="1290.20" y="157.6" width="12" height="13" fill="#656d8b"/><rect x="1336.00" y="159.6" width="12" height="11" fill="#656d8b"/><rect x="1349.20" y="163.6" width="12" height="7" fill="#656d8b"/><rect x="1362.40" y="150.6" width="12" height="20" fill="#656d8b"/><rect x="1375.60" y="157.6" width="12" height="13" fill="#656d8b"/><rect x="1388.80" y="167.6" width="12" height="3" fill="#656d8b"/><rect x="1402.00" y="163.6" width="12" height="7" fill="#656d8b"/><rect x="1415.20" y="143.6" width="12" height="27" fill="#656d8b"/><rect x="1428.40" y="163.6" width="12" height="7" fill="#656d8b"/><rect x="1441.60" y="163.6" width="12" height="7" fill="#656d8b"/><rect x="1454.80" y="165.6" width="12" height="5" fill="#656d8b"/><rect x="1468.00" y="166.6" width="12" height="4" fill="#656d8b"/><rect x="1481.20" y="157.6" width="12" height="13" fill="#656d8b"/><defs><linearGradient id="g1" x1="0" y1="0" x2="0" y2="1"><stop offset="0" stop-color="#5b6282" stop-opacity="0.55"/><stop offset="1" stop-color="#5b6282" stop-opacity="0"/></linearGradient></defs><path d="M1525.2 166.3 L1543.5 163.1 L1569.6 166.3 L1594.6 146.6 L1625.0 146.6 L1656.5 142.0 L1675.1 144.8 L1692.3 144.8 L1692.3 182.6 L1525.2 182.6 Z" fill="url(#g1)"/><path d="M1525.2 166.3 L1543.5 163.1 L1569.6 166.3 L1594.6 146.6 L1625.0 146.6 L1656.5 142.0 L1675.1 144.8 L1692.3 144.8" stroke="#8d94b3" stroke-width="1" fill="none"/></svg>
<div style="position:absolute;left:1129px;top:183px;width:574px;height:1px;background:#3a3f57;"></div>
<span style="position:absolute;top:204px;font-size:13px;line-height:13px;letter-spacing:0.191px;color:#eef0f6;white-space:nowrap;left:1147.80px;-webkit-text-stroke:0.15px #eef0f6;">Service</span>
<span style="position:absolute;top:237px;font-size:13px;line-height:13px;letter-spacing:0.454px;color:#eef0f6;white-space:nowrap;left:1147.80px;-webkit-text-stroke:0.15px #eef0f6;">Namespace</span>
<span style="position:absolute;top:271px;font-size:13px;line-height:13px;letter-spacing:0.579px;color:#eef0f6;white-space:nowrap;left:1147.80px;-webkit-text-stroke:0.15px #eef0f6;">Container</span>
<span style="position:absolute;top:305px;font-size:13px;line-height:13px;letter-spacing:0.434px;color:#eef0f6;white-space:nowrap;left:1147.80px;-webkit-text-stroke:0.15px #eef0f6;">Pod</span>
<span style="position:absolute;top:336px;font-size:13px;line-height:13px;letter-spacing:0.682px;color:#eef0f6;white-space:nowrap;left:1147.80px;-webkit-text-stroke:0.15px #eef0f6;">Runtime</span>
<svg style="position:absolute;left:1238px;top:204.5px;overflow:visible;" width="13" height="11" viewBox="0 0 13 11" fill="none"><g fill="#8a91b4"><path d="M7.2 0.8 L8.4 0.6 L12.4 8.8 L12 9.8 L7.8 9.8 L6 3.4 Z"/><path d="M3.6 2.6 L4.8 2.4 L6.8 9.6 L6.2 10.2 L3.6 9.6 L2.6 5.2 Z"/><path d="M0.9 5 L1.7 4.8 L2.6 9 L2.1 9.3 L0.7 8.5 L0.6 6.4 Z"/></g></svg>
<span style="position:absolute;top:204px;font-size:13px;line-height:13px;letter-spacing:0.514px;color:#9fa6c4;white-space:nowrap;left:1256.00px;-webkit-text-stroke:0.12px #9fa6c4;">Deployment</span>
<svg style="position:absolute;left:1338.9px;top:207.8px;overflow:visible;" width="3.6" height="5.2" viewBox="0 0 3.6 5.2" fill="none"><path d="M0.7 0.5 L2.6 2.6 L0.7 4.7" stroke="#6f7696" stroke-width="1.2" stroke-linecap="round" stroke-linejoin="round"/></svg>
<span style="position:absolute;top:204px;font-size:13px;line-height:13px;letter-spacing:0.732px;color:#9fa6c4;white-space:nowrap;left:1350.00px;-webkit-text-stroke:0.12px #9fa6c4;">webapp-deployment</span>
<svg style="position:absolute;left:1237.5px;top:237.2px;overflow:visible;" width="14" height="14" viewBox="0 0 24 24" fill="none"><g stroke="#8a91b4" stroke-width="2.23" stroke-linecap="round" stroke-linejoin="round" fill="none"><path d="M12.6 2.6A2 2 0 0 0 11.2 2H4a2 2 0 0 0-2 2v7.2a2 2 0 0 0 .6 1.4l8.7 8.7a2.4 2.4 0 0 0 3.4 0l6.6-6.6a2.4 2.4 0 0 0 0-3.4z"/><circle cx="7.5" cy="7.5" r=".8" fill="#8a91b4"/></g></svg>
<div style="position:absolute;left:1260.6px;top:241.8px;width:1.3px;height:8.8px;background:#a2a8c3;border-radius:0.6px;"></div>
<span style="position:absolute;top:237px;font-size:13px;line-height:13px;letter-spacing:0.125px;color:#9fa6c4;white-space:nowrap;left:1309.20px;-webkit-text-stroke:0.12px #9fa6c4;">ion</span>
<div style="position:absolute;left:1262px;top:237px;width:47px;height:24px;box-sizing:border-box;border:1px solid #454a62;border-radius:6px;background:#2a2e42;box-shadow:0 2px 6px rgba(0,0,0,.3);"></div>
<div style="position:absolute;left:1285px;top:238px;width:1px;height:22px;background:#454a62;"></div>
<svg style="position:absolute;left:1266.8px;top:241.8px;overflow:visible;" width="14.4" height="14.4" viewBox="0 0 24 24" fill="none"><g stroke="#a5acd0" stroke-width="1.75" stroke-linecap="round" stroke-linejoin="round" fill="none"><rect x="3" y="3" width="18" height="18" rx="3"/><path d="m7.5 8.5 2 2-2 2"/><path d="M12 12.5h3.5"/></g></svg>
<svg style="position:absolute;left:1290px;top:243.9px;overflow:visible;" width="14" height="11.2" viewBox="0 0 14 11.2" fill="none"><g stroke="#a5acd0" stroke-width="1" fill="none"><rect x="0.5" y="0.5" width="8.8" height="2.1" rx="1.05"/><rect x="3.6" y="4.5" width="6.8" height="2.1" rx="1.05"/><rect x="4.4" y="8.600" width="9.100" height="2.100" rx="1.050"/></g></svg>
<div style="position:absolute;left:1233px;top:264px;width:107px;height:26px;background:#31364b;border-radius:6.5px;"></div>
<svg style="position:absolute;left:1240px;top:270.6px;overflow:visible;" width="12" height="12" viewBox="0 0 12 12" fill="none"><g stroke="#8a91b4" stroke-width="1.05" fill="none" stroke-linejoin="round" stroke-linecap="round"><path d="M4.8 2.6V0.8h2.4v1.8"/><path d="M3 5.4V2.8h6v2.6"/><path d="M1.4 5.600h9.200l-1.200 4H2.600z"/><path d="M0.4 11.400c1 -0.600 1.800-0.600 2.800 0s1.800 0.600 2.800 0 1.800-0.600 2.800 0 1.800 0.600 2.800 0"/></g></svg>
<span style="position:absolute;top:270px;font-size:13px;line-height:13px;letter-spacing:0.630px;color:#9fa6c4;white-space:nowrap;left:1259.00px;-webkit-text-stroke:0.12px #9fa6c4;">nginx-proxy</span>
<svg style="position:absolute;left:1237.5px;top:306px;overflow:visible;" width="13" height="11" viewBox="0 0 13 11" fill="none"><g fill="#8a91b4"><path d="M0.6 5.4h9.6c.6 0 1.4-.3 1.8-.9.5.3.5 1 .2 1.4-.5.6-1.3.7-1.9.6C9.6 9 7.6 10.4 5 10.4 2.2 10.4.6 8.6.6 5.4z"/><rect x="2" y="3.4" width="1.6" height="1.5"/><rect x="4" y="3.4" width="1.6" height="1.5"/><rect x="6" y="3.4" width="1.6" height="1.5"/><rect x="4" y="1.4" width="1.6" height="1.5"/><rect x="6" y="1.4" width="1.6" height="1.5"/></g></svg>
<span style="position:absolute;top:305px;font-size:13px;line-height:13px;letter-spacing:0.812px;color:#9fa6c4;white-space:nowrap;left:1256.00px;-webkit-text-stroke:0.12px #9fa6c4;">webapp-deployment-7d4b8c9f5-xyz89</span>
<svg style="position:absolute;left:1237.8px;top:336.4px;overflow:visible;" width="12.4" height="12.8" viewBox="0 0 12.4 12.8" fill="none"><path d="M6.2 0.8 L11.4 3.7 V9.2 L6.2 12.1 L1 9.2 V3.7 Z" stroke="#8a91b4" stroke-width="1" fill="none" stroke-linejoin="round"/><text x="3.5" y="8.5" font-family="Liberation Sans" font-size="5.4" font-weight="bold" fill="#8a91b4" stroke="#8a91b4" stroke-width="0.25">JS</text></svg>
<span style="position:absolute;top:336px;font-size:13px;line-height:13px;letter-spacing:0.537px;color:#9fa6c4;white-space:nowrap;left:1258.40px;-webkit-text-stroke:0.12px #9fa6c4;">Node.js</span>
<div style="position:absolute;left:1129px;top:366px;width:574px;height:1px;background:#3a3f57;"></div>
<svg style="position:absolute;left:1310px;top:283px;overflow:visible;" width="16" height="17" viewBox="0 0 16 17" fill="none"><path d="M3 1.300C3.200 0.300 4.800 0.200 5.200 1.200L7.400 6.600C7.800 5.800 9.300 5.900 9.700 6.800C10.200 6.200 11.500 6.400 11.900 7.300C12.500 6.900 13.900 7.300 14.300 8.500C14.800 10 14.600 12.600 13.200 15.600H7.600C6.600 14 4.600 12.200 2.400 10.400C1.200 9.400 0.700 8.400 1.100 7.600C1.600 6.700 3 6.900 4.800 8.800Z" fill="#fff" stroke="#0b0c12" stroke-width="1" stroke-linejoin="round"/><path d="M8.300 9.400L8.500 13.200M10.300 9.600L10.400 13.200M12.300 9.800L12.300 13.200" stroke="#0b0c12" stroke-width="0.8" stroke-linecap="round"/></svg>
<span style="position:absolute;top:386px;font-size:13px;line-height:13px;letter-spacing:0.534px;color:#eef0f6;white-space:nowrap;left:1146.80px;-webkit-text-stroke:0.15px #eef0f6;">Apdex</span>
<svg style="position:absolute;left:1191.7px;top:388.0px;overflow:visible;" width="9" height="9" viewBox="0 0 9 9" fill="none"><circle cx="4.5" cy="4.5" r="4.5" fill="#666d8e"/><rect x="3.9" y="3.9" width="1.2" height="3" fill="#2a2e42"/><circle cx="4.5" cy="2.6" r="0.75" fill="#2a2e42"/></svg>
<span style="position:absolute;top:384px;font-size:16px;line-height:16px;letter-spacing:0.620px;color:#eef0f6;white-space:nowrap;left:1648.30px;-webkit-text-stroke:0.3px #eef0f6;">0.92</span>
<svg style="position:absolute;left:0;top:0" width="1728" height="1117" viewBox="0 0 1728 1117"><rect x="1170" y="411.8" width="514.4000000000001" height="21.9" fill="#24383f"/><rect x="1170" y="433.7" width="514.4000000000001" height="43.6" fill="#393538"/><rect x="1170" y="477.3" width="514.4000000000001" height="60.1" fill="#393043"/><rect x="1170" y="411.8" width="1.2" height="21.9" fill="#2dbd8c"/><rect x="1170" y="433.7" width="1.2" height="43.6" fill="#d88a3b"/><rect x="1170" y="477.3" width="1.2" height="60.1" fill="#de6480"/><rect x="1170" y="476.8" width="514.4000000000001" height="1" fill="#333049"/><rect x="1170" y="537" width="514.4000000000001" height="1" fill="#4a506e"/><path d="M1172.0 420.6 L1175.4 419.5 L1178.8 421.3 L1182.2 419.2 L1185.7 421.1 L1189.1 420.4 L1192.5 420.0 L1195.9 421.0 L1199.3 419.9 L1202.7 420.7 L1206.1 420.0 L1209.5 419.3 L1213.0 420.8 L1216.4 422.4 L1219.8 420.1 L1223.2 419.8 L1226.6 421.3 L1230.0 422.9 L1233.4 421.2 L1236.9 420.6 L1240.3 422.1 L1243.7 419.1 L1247.1 421.8 L1250.5 420.1 L1253.9 420.2 L1257.3 419.4 L1260.7 420.6 L1264.2 422.3 L1267.6 420.3 L1271.0 421.3 L1274.4 421.3 L1277.8 420.5 L1281.2 421.1 L1284.6 419.2 L1288.1 420.0 L1291.5 419.8 L1294.9 421.4 L1298.3 420.7 L1301.7 420.6 L1305.1 421.4 L1308.5 420.9 L1311.9 420.2 L1315.4 421.7 L1318.8 421.8 L1322.2 420.4 L1325.6 421.3 L1329.0 421.1 L1332.4 422.6 L1335.8 421.5 L1339.3 420.1 L1342.7 422.1 L1346.1 419.4 L1349.5 420.8 L1352.9 422.1 L1356.3 420.2 L1359.7 425.6 L1363.1 419.9 L1366.6 421.7 L1370.0 421.6 L1373.4 421.3 L1376.8 421.9 L1380.2 420.2 L1383.6 421.5 L1387.0 421.4 L1390.5 421.2 L1393.9 420.8 L1397.3 421.8 L1400.7 422.9 L1404.1 420.9 L1407.5 421.7 L1410.9 420.0 L1414.3 421.8 L1417.8 421.3 L1421.2 423.1 L1424.6 421.7 L1428.0 420.1 L1431.4 420.7 L1434.8 421.7 L1438.2 419.9 L1441.7 420.8 L1445.1 420.2 L1448.5 419.4 L1451.9 420.0 L1455.3 422.1 L1458.7 420.1 L1462.1 419.9 L1465.5 420.7 L1469.0 422.6 L1472.4 420.0 L1475.8 420.8 L1479.2 421.1 L1482.6 422.6 L1486.0 421.7 L1489.4 422.5 L1492.9 420.5 L1496.3 420.6 L1499.7 420.7 L1503.1 422.6 L1506.5 422.1 L1509.9 419.5 L1513.3 420.3 L1516.7 419.9 L1520.2 420.4 L1523.6 420.9 L1527.0 421.2 L1530.4 420.0 L1533.8 419.9 L1537.2 420.7 L1540.6 420.7 L1544.1 421.3 L1547.5 422.0 L1550.9 421.8 L1554.3 421.0 L1557.7 421.5 L1561.1 419.0 L1564.5 412.4 L1567.9 421.9 L1571.4 422.2 L1574.8 421.9 L1578.2 422.3 L1581.6 420.8 L1585.0 420.6 L1588.4 420.1 L1591.8 421.0 L1595.3 440.6 L1598.7 421.0 L1602.1 420.3 L1605.5 419.6 L1608.9 420.6 L1612.3 419.1 L1615.7 419.8 L1619.1 419.5 L1622.6 420.1 L1626.0 420.4 L1629.4 419.9 L1632.8 422.6 L1636.2 421.3 L1639.6 419.5 L1643.0 420.4 L1646.5 420.4 L1649.9 420.7 L1653.3 419.4 L1656.7 421.8 L1660.1 423.1 L1663.5 420.9 L1666.9 420.9 L1670.3 420.0 L1673.8 419.3 L1677.2 420.6 L1680.6 420.0 L1684.0 421.8" stroke="#eef0f6" stroke-width="1" fill="none" stroke-linejoin="round"/></svg>
<span style="position:absolute;top:412px;font-size:11px;line-height:11px;letter-spacing:0.200px;color:#9097b6;white-space:nowrap;right:565px;-webkit-text-stroke:0.12px #9097b6;">1</span>
<span style="position:absolute;top:436px;font-size:11px;line-height:11px;letter-spacing:0.200px;color:#9097b6;white-space:nowrap;right:565px;-webkit-text-stroke:0.12px #9097b6;">0.8</span>
<span style="position:absolute;top:460px;font-size:11px;line-height:11px;letter-spacing:0.200px;color:#9097b6;white-space:nowrap;right:565px;-webkit-text-stroke:0.12px #9097b6;">0.6</span>
<span style="position:absolute;top:484px;font-size:11px;line-height:11px;letter-spacing:0.200px;color:#9097b6;white-space:nowrap;right:565px;-webkit-text-stroke:0.12px #9097b6;">0.4</span>
<span style="position:absolute;top:508px;font-size:11px;line-height:11px;letter-spacing:0.200px;color:#9097b6;white-space:nowrap;right:565px;-webkit-text-stroke:0.12px #9097b6;">0.2</span>
<span style="position:absolute;top:532px;font-size:11px;line-height:11px;letter-spacing:0.200px;color:#9097b6;white-space:nowrap;right:565px;-webkit-text-stroke:0.12px #9097b6;">0</span>
<span style="position:absolute;top:546px;font-size:11px;line-height:11px;letter-spacing:-0.168px;color:#9097b6;white-space:nowrap;left:1171.00px;-webkit-text-stroke:0.12px #9097b6;">09:00am</span>
<span style="position:absolute;top:546px;font-size:11px;line-height:11px;letter-spacing:-0.168px;color:#9097b6;white-space:nowrap;left:1251.00px;-webkit-text-stroke:0.12px #9097b6;">09:30am</span>
<span style="position:absolute;top:546px;font-size:11px;line-height:11px;letter-spacing:-0.468px;color:#9097b6;white-space:nowrap;left:1331.20px;-webkit-text-stroke:0.12px #9097b6;">10:00am</span>
<span style="position:absolute;top:546px;font-size:11px;line-height:11px;letter-spacing:-0.409px;color:#9097b6;white-space:nowrap;left:1409.20px;-webkit-text-stroke:0.12px #9097b6;">10:30 am</span>
<span style="position:absolute;top:546px;font-size:11px;line-height:11px;letter-spacing:-0.598px;color:#9097b6;white-space:nowrap;left:1490.00px;-webkit-text-stroke:0.12px #9097b6;">11:00am</span>
<span style="position:absolute;top:546px;font-size:11px;line-height:11px;letter-spacing:-0.565px;color:#9097b6;white-space:nowrap;left:1566.20px;-webkit-text-stroke:0.12px #9097b6;">11:30am</span>
<span style="position:absolute;top:546px;font-size:11px;line-height:11px;letter-spacing:-0.434px;color:#9097b6;white-space:nowrap;left:1642.30px;-webkit-text-stroke:0.12px #9097b6;">12:00pm</span>
<div style="position:absolute;left:1148px;top:578.5px;width:8.4px;height:8.4px;background:#fff;border-radius:2px;"></div>
<span style="position:absolute;top:578px;font-size:11px;line-height:11px;letter-spacing:0.312px;color:#9097b6;white-space:nowrap;left:1162.00px;-webkit-text-stroke:0.12px #9097b6;">App server</span>
<span style="position:absolute;top:639px;font-size:13px;line-height:13px;letter-spacing:0.507px;color:#eef0f6;white-space:nowrap;left:1131.80px;-webkit-text-stroke:0.15px #eef0f6;">Instances</span>
<svg style="position:absolute;left:1199.5px;top:641.7px;overflow:visible;" width="9" height="9" viewBox="0 0 9 9" fill="none"><circle cx="4.5" cy="4.5" r="4.5" fill="#666d8e"/><rect x="3.9" y="3.9" width="1.2" height="3" fill="#2a2e42"/><circle cx="4.5" cy="2.6" r="0.75" fill="#2a2e42"/></svg>
<div style="position:absolute;left:1128px;top:668px;width:576px;height:148px;box-sizing:border-box;border:1px solid #3a3f57;border-radius:8px;"></div>
<div style="position:absolute;left:1129px;top:669px;width:574px;height:41px;background:#2e3247;border-radius:7px 7px 0 0;"></div>
<div style="position:absolute;left:1129px;top:710px;width:574px;height:1px;background:#3a3f57;"></div>
<svg style="position:absolute;left:1141.6px;top:681.0px;overflow:visible;" width="14" height="14" viewBox="0 0 24 24" fill="none"><g stroke="#6f7696" stroke-width="2.23" stroke-linecap="round" stroke-linejoin="round" fill="none"><ellipse cx="12" cy="5.5" rx="7.5" ry="3"/><path d="M4.5 5.500v13c0 1.660 3.360 3 7.500 3s7.500-1.340 7.500-3v-13"/><path d="M4.500 12c0 1.660 3.360 3 7.500 3s7.500-1.340 7.500-3"/></g></svg>
<span style="position:absolute;top:682px;font-size:13px;line-height:13px;letter-spacing:0.702px;color:#eef0f6;white-space:nowrap;left:1161.80px;-webkit-text-stroke:0.3px #eef0f6;">telemetry-web1</span>
<div style="position:absolute;left:1319px;top:712px;width:1px;height:103px;background:#3a3f57;"></div><div style="position:absolute;left:1511px;top:712px;width:1px;height:103px;background:#3a3f57;"></div><span style="position:absolute;top:727px;font-size:12px;line-height:12px;letter-spacing:0.329px;color:#9fa6c4;white-space:nowrap;left:1144.00px;-webkit-text-stroke:0.12px #9fa6c4;">Requests</span><span style="position:absolute;top:725px;font-size:12px;line-height:12px;letter-spacing:0.267px;color:#9fa6c4;white-space:nowrap;left:1336.00px;-webkit-text-stroke:0.12px #9fa6c4;">Errors</span><span style="position:absolute;top:725px;font-size:12px;line-height:12px;letter-spacing:0.520px;color:#9fa6c4;white-space:nowrap;left:1525.00px;-webkit-text-stroke:0.12px #9fa6c4;">Duration</span><span style="position:absolute;top:748px;font-size:16px;line-height:16px;letter-spacing:1.003px;color:#eef0f6;white-space:nowrap;left:1144.00px;-webkit-text-stroke:0.3px #eef0f6;">30</span><span style="position:absolute;top:751px;font-size:12px;line-height:12px;letter-spacing:0.374px;color:#eef0f6;white-space:nowrap;left:1167.10px;-webkit-text-stroke:0.3px #eef0f6;">/ min</span><span style="position:absolute;top:746px;font-size:16px;line-height:16px;letter-spacing:-0.242px;color:#eef0f6;white-space:nowrap;left:1336.00px;-webkit-text-stroke:0.3px #eef0f6;">1.00%</span><span style="position:absolute;top:746px;font-size:16px;line-height:16px;letter-spacing:0.720px;color:#eef0f6;white-space:nowrap;left:1525.00px;-webkit-text-stroke:0.3px #eef0f6;">9.28</span><span style="position:absolute;top:749px;font-size:12px;line-height:12px;letter-spacing:0.104px;color:#eef0f6;white-space:nowrap;left:1561.90px;-webkit-text-stroke:0.3px #eef0f6;">ms</span><svg style="position:absolute;left:0;top:0" width="1728" height="1117" viewBox="0 0 1728 1117"><rect x="1145.00" y="791.6" width="12" height="11" fill="#656d8b"/><rect x="1158.20" y="795.6" width="12" height="7" fill="#656d8b"/><rect x="1171.40" y="782.6" width="12" height="20" fill="#656d8b"/><rect x="1184.60" y="789.6" width="12" height="13" fill="#656d8b"/><rect x="1197.80" y="799.6" width="12" height="3" fill="#656d8b"/><rect x="1211.00" y="795.6" width="12" height="7" fill="#656d8b"/><rect x="1224.20" y="775.6" width="12" height="27" fill="#656d8b"/><rect x="1237.40" y="795.6" width="12" height="7" fill="#656d8b"/><rect x="1250.60" y="795.6" width="12" height="7" fill="#656d8b"/><rect x="1263.80" y="797.6" width="12" height="5" fill="#656d8b"/><rect x="1277.00" y="798.6" width="12" height="4" fill="#656d8b"/><rect x="1290.20" y="789.6" width="12" height="13" fill="#656d8b"/><rect x="1336.00" y="791.6" width="12" height="11" fill="#656d8b"/><rect x="1349.20" y="795.6" width="12" height="7" fill="#656d8b"/><rect x="1362.40" y="782.6" width="12" height="20" fill="#656d8b"/><rect x="1375.60" y="789.6" width="12" height="13" fill="#656d8b"/><rect x="1388.80" y="799.6" width="12" height="3" fill="#656d8b"/><rect x="1402.00" y="795.6" width="12" height="7" fill="#656d8b"/><rect x="1415.20" y="775.6" width="12" height="27" fill="#656d8b"/><rect x="1428.40" y="795.6" width="12" height="7" fill="#656d8b"/><rect x="1441.60" y="795.6" width="12" height="7" fill="#656d8b"/><rect x="1454.80" y="797.6" width="12" height="5" fill="#656d8b"/><rect x="1468.00" y="798.6" width="12" height="4" fill="#656d8b"/><rect x="1481.20" y="789.6" width="12" height="13" fill="#656d8b"/><defs><linearGradient id="g2" x1="0" y1="0" x2="0" y2="1"><stop offset="0" stop-color="#5b6282" stop-opacity="0.55"/><stop offset="1" stop-color="#5b6282" stop-opacity="0"/></linearGradient></defs><path d="M1525.2 798.3 L1543.5 795.1 L1569.6 798.3 L1594.6 778.6 L1625.0 778.6 L1656.5 774.0 L1675.1 776.8 L1692.3 776.8 L1692.3 814.6 L1525.2 814.6 Z" fill="url(#g2)"/><path d="M1525.2 798.3 L1543.5 795.1 L1569.6 798.3 L1594.6 778.6 L1625.0 778.6 L1656.5 774.0 L1675.1 776.8 L1692.3 776.8" stroke="#8d94b3" stroke-width="1" fill="none"/></svg>
<div style="position:absolute;left:1128px;top:830px;width:576px;height:43px;box-sizing:border-box;border:1px solid #3a3f57;border-radius:8px;background:#2e3247;"></div>
<svg style="position:absolute;left:1141.6px;top:844.0px;overflow:visible;" width="14" height="14" viewBox="0 0 24 24" fill="none"><g stroke="#6f7696" stroke-width="2.23" stroke-linecap="round" stroke-linejoin="round" fill="none"><ellipse cx="12" cy="5.5" rx="7.5" ry="3"/><path d="M4.5 5.500v13c0 1.660 3.360 3 7.500 3s7.500-1.340 7.500-3v-13"/><path d="M4.500 12c0 1.660 3.360 3 7.500 3s7.500-1.340 7.500-3"/></g></svg>
<span style="position:absolute;top:844px;font-size:13px;line-height:13px;letter-spacing:0.779px;color:#eef0f6;white-space:nowrap;left:1161.80px;-webkit-text-stroke:0.3px #eef0f6;">telemetry-web2</span>
<span style="position:absolute;top:917px;font-size:13px;line-height:13px;letter-spacing:0.320px;color:#eef0f6;white-space:nowrap;left:1131.80px;-webkit-text-stroke:0.15px #eef0f6;">Resources</span>
<svg style="position:absolute;left:1204.5px;top:920.3px;overflow:visible;" width="9" height="9" viewBox="0 0 9 9" fill="none"><circle cx="4.5" cy="4.5" r="4.5" fill="#666d8e"/><rect x="3.9" y="3.9" width="1.2" height="3" fill="#2a2e42"/><circle cx="4.5" cy="2.6" r="0.75" fill="#2a2e42"/></svg>
<div style="position:absolute;left:1128px;top:946px;width:576px;height:43px;box-sizing:border-box;border:1px solid #3a3f57;border-radius:8px;background:#2e3247;"></div>
<span style="position:absolute;top:962px;font-size:9px;line-height:9px;letter-spacing:-0.703px;color:#8289a9;white-space:nowrap;left:1142.20px;-webkit-text-stroke:0.2px #8289a9;">aws</span>
<svg style="position:absolute;left:1142px;top:970px;overflow:visible;" width="17" height="4.5" viewBox="0 0 17 4.5" fill="none"><path d="M0.600 0.600C4 3.600 10.500 3.600 14.200 1.400" stroke="#8289a9" stroke-width="0.9" fill="none" stroke-linecap="round"/><path d="M13 0.500L15.400 0.700L14.800 2.900" stroke="#8289a9" stroke-width="0.8" fill="none" stroke-linecap="round" stroke-linejoin="round"/></svg>
<svg style="position:absolute;left:1167.8px;top:965px;overflow:visible;" width="4" height="6" viewBox="0 0 4 6" fill="none"><path d="M0.7 0.5 L3 3 L0.7 5.5" stroke="#6f7696" stroke-width="1.2" stroke-linecap="round" stroke-linejoin="round"/></svg>
<span style="position:absolute;top:962px;font-size:13px;line-height:13px;letter-spacing:0.740px;color:#eef0f6;white-space:nowrap;left:1179.80px;-webkit-text-stroke:0.3px #eef0f6;">eu-west-1</span>
</div></body></html>
